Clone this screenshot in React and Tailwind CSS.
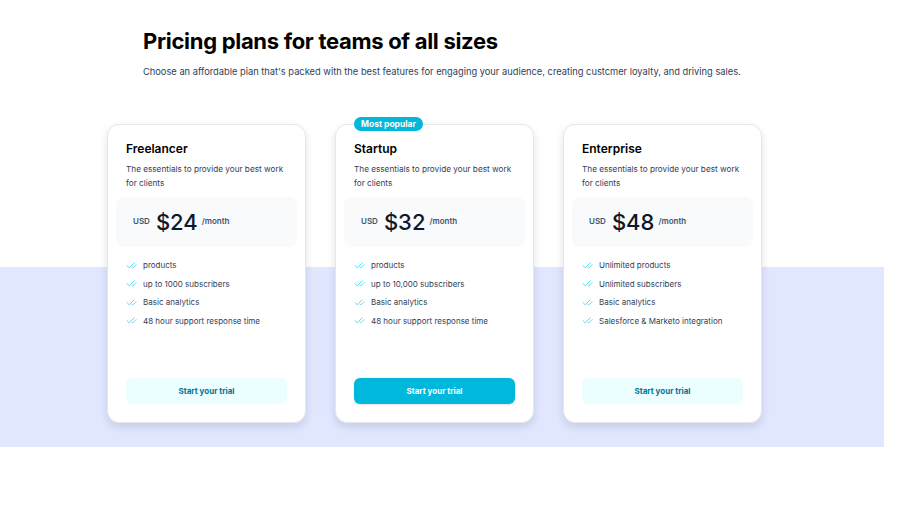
import React from "react";
import { CheckCheck } from "lucide-react";

const plans = [
  {
    name: "Freelancer",
    price: "24",
    features: ["products", "up to 1000 subscribers", "Basic analytics", "48 hour support response time"],
  },
  {
    name: "Startup",
    price: "32",
    popular: true,
    features: ["products", "up to 10,000 subscribers", "Basic analytics", "48 hour support response time"],
  },
  {
    name: "Enterprise",
    price: "48",
    features: ["Unlimited products", "Unlimited subscribers", "Basic analytics", "Salesforce & Marketo integration"],
  },
];

function PlanCard({ plan }) {
  return (
    <div className="relative flex h-[299px] w-[199px] flex-col rounded-xl border border-gray-200 bg-white px-2 pt-[16px] pb-[18px] shadow-[0_4px_8px_rgba(15,23,42,0.12)]">
      {plan.popular && (
        <span className="absolute -top-[8px] left-[18px] rounded-full bg-cyan-500 px-[7px] py-[1px] text-[8.5px] font-bold leading-[12px] text-white">
          Most popular
        </span>
      )}
      <h3 className="px-[10px] text-[12px] font-semibold leading-[16px] text-black">{plan.name}</h3>
      <p className="mt-[5px] px-[10px] text-[8.2px] leading-[14px] text-slate-700">
        The essentials to provide your best work for clients
      </p>
      <div className="mt-[7px] flex h-[50px] items-center rounded-lg bg-slate-50 pl-[17px]">
        <span className="mr-[6px] mb-[3px] text-[8px] font-semibold text-slate-600">USD</span>
        <span className="text-[22px] font-medium leading-none text-slate-900">${plan.price}</span>
        <span className="ml-[4px] mb-[3px] text-[8px] font-semibold text-slate-600">/month</span>
      </div>
      <ul className="mt-[11px] flex flex-col gap-[4.6px] px-[10px]">
        {plan.features.map((f) => (
          <li key={f} className="flex items-center text-[8px] leading-[14px] text-slate-700">
            <CheckCheck className="mr-[6px] h-[11px] w-[11px] text-cyan-400" strokeWidth={1.5} />
            {f}
          </li>
        ))}
      </ul>
      <div className="mt-auto px-[10px]">
        <button
          type="button"
          className={`h-[26px] w-full rounded-md text-[8px] font-bold ${
            plan.popular
              ? "bg-cyan-500 text-white shadow-sm"
              : "bg-cyan-50 text-cyan-700"
          }`}
        >
          Start your trial
        </button>
      </div>
    </div>
  );
}

export default function App() {
  return (
    <div className="min-h-[507px] w-[884px] bg-white pt-[27px] font-['Inter',sans-serif]">
      <div className="pl-[143px]">
        <h1 className="text-[22px] font-bold leading-[28px] tracking-[-0.3px] text-black">
          Pricing plans for teams of all sizes
        </h1>
        <p className="mt-[10px] text-[9.3px] leading-[14px] text-slate-700">
          Choose an affordable pian that's packed with the best features for engaging your audience, creating custcmer loyalty, and driving sales.
        </p>
      </div>
      <div className="relative z-10 mt-[45px] flex gap-[29px] pl-[107px]">
        {plans.map((p) => (
          <PlanCard key={p.name} plan={p} />
        ))}
      </div>
      <div className="-mt-[156px] h-[180px] bg-indigo-100" />
    </div>
  );
}
